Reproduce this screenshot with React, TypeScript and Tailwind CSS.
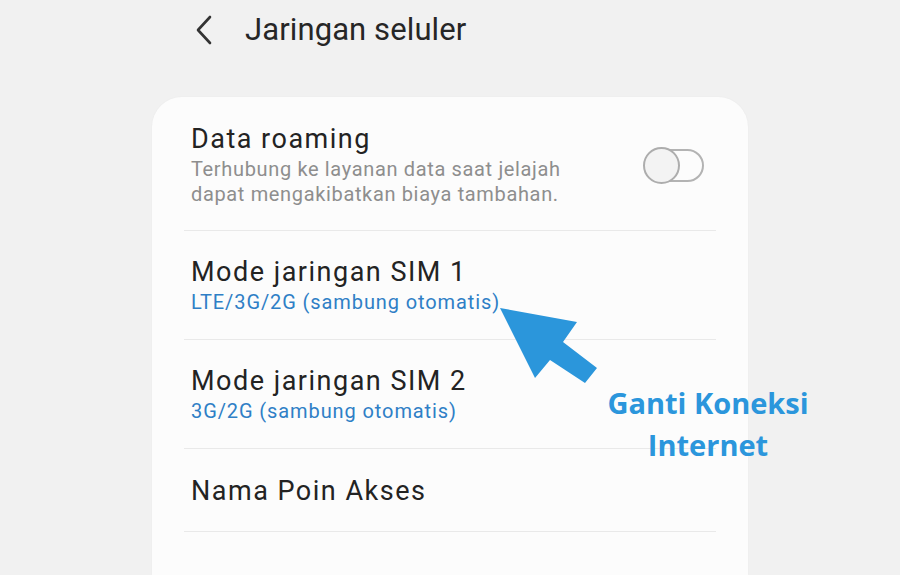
import React from "react";

function Toggle() {
  return (
    <div className="relative w-[61px] h-[37px] shrink-0">
      <div className="absolute left-[6px] top-[2px] w-[55px] h-[33px] rounded-full border-2 border-[#b3b3b3] bg-[#fcfcfc]" />
      <div className="absolute left-0 top-0 w-[37px] h-[37px] rounded-full border-2 border-[#adadad] bg-[#f3f3f3]" />
    </div>
  );
}

function Row({
  title,
  sub,
  subTone,
  pt = "pt-[25px]",
  pb = "pb-[24px]",
  right,
}: {
  title: string;
  sub?: React.ReactNode;
  subTone?: "gray" | "blue";
  pt?: string;
  pb?: string;
  right?: React.ReactNode;
}) {
  return (
    <div className={`flex items-center border-b border-[#e9e9e9] pl-[7px] pr-[12px] ${pt} ${pb}`}>
      <div className="flex-1">
        <div className="text-[27px] leading-[32px] tracking-[1.5px] text-[#232323]">{title}</div>
        {sub && (
          <div
            className={
              subTone === "blue"
                ? "mt-[2px] text-[20px] leading-[25px] tracking-[0.9px] text-[#2f7fc6]"
                : "mt-[2px] text-[20px] leading-[25px] tracking-[0.65px] text-[#8e8e8e]"
            }
          >
            {sub}
          </div>
        )}
      </div>
      {right}
    </div>
  );
}

export default function App() {
  return (
    <div
      className="relative w-[900px] h-[575px] overflow-hidden bg-[#f1f1f1] flex flex-col"
      style={{ fontFamily: "Roboto, 'Noto Sans', Arial, sans-serif" }}
    >
      {/* top bar */}
      <div className="h-[97px] shrink-0 flex items-start pt-[10px] pl-[193px]">
        <svg width="22" height="40" viewBox="0 0 22 40">
          <path d="M17 7 L5 20 L17 33" fill="none" stroke="#333333" strokeWidth="2.6" strokeLinecap="round" strokeLinejoin="round" />
        </svg>
        <span className="ml-[30px] text-[31px] leading-[40px] tracking-[0.1px] text-[#262626]">Jaringan seluler</span>
      </div>

      {/* settings card */}
      <div className="ml-[152px] w-[596px] flex-1 rounded-t-[30px] bg-[#fcfcfc] px-[32px] shadow-[0_0_2px_rgba(0,0,0,0.04)]">
        <Row
          title="Data roaming"
          subTone="gray"
          pt="pt-[26px]"
          pb="pb-[23px]"
          sub={
            <>
              <span className="block">Terhubung ke layanan data saat jelajah</span>
              <span className="block">dapat mengakibatkan biaya tambahan.</span>
            </>
          }
          right={<Toggle />}
        />
        <Row title="Mode jaringan SIM 1" subTone="blue" sub="LTE/3G/2G (sambung otomatis)" />
        <Row title="Mode jaringan SIM 2" subTone="blue" sub="3G/2G (sambung otomatis)" />
        <Row title="Nama Poin Akses" pt="pt-[26px]" pb="pb-[24px]" />
      </div>

      {/* callout arrow */}
      <svg className="absolute left-0 top-0" width="900" height="575" viewBox="0 0 900 575">
        <polygon
          points="500,308 577,322 563,342 597,368 585,383 550,360 535,378"
          fill="#2b96db"
        />
      </svg>

      {/* callout label */}
      <div
        className="absolute left-[598px] top-[382px] w-[220px] text-center text-[29px] leading-[42px] font-bold text-[#2b96dc]"
        style={{ fontFamily: "'Open Sans', 'Noto Sans', sans-serif" }}
      >
        Ganti Koneksi
        <br />
        Internet
      </div>
    </div>
  );
}
